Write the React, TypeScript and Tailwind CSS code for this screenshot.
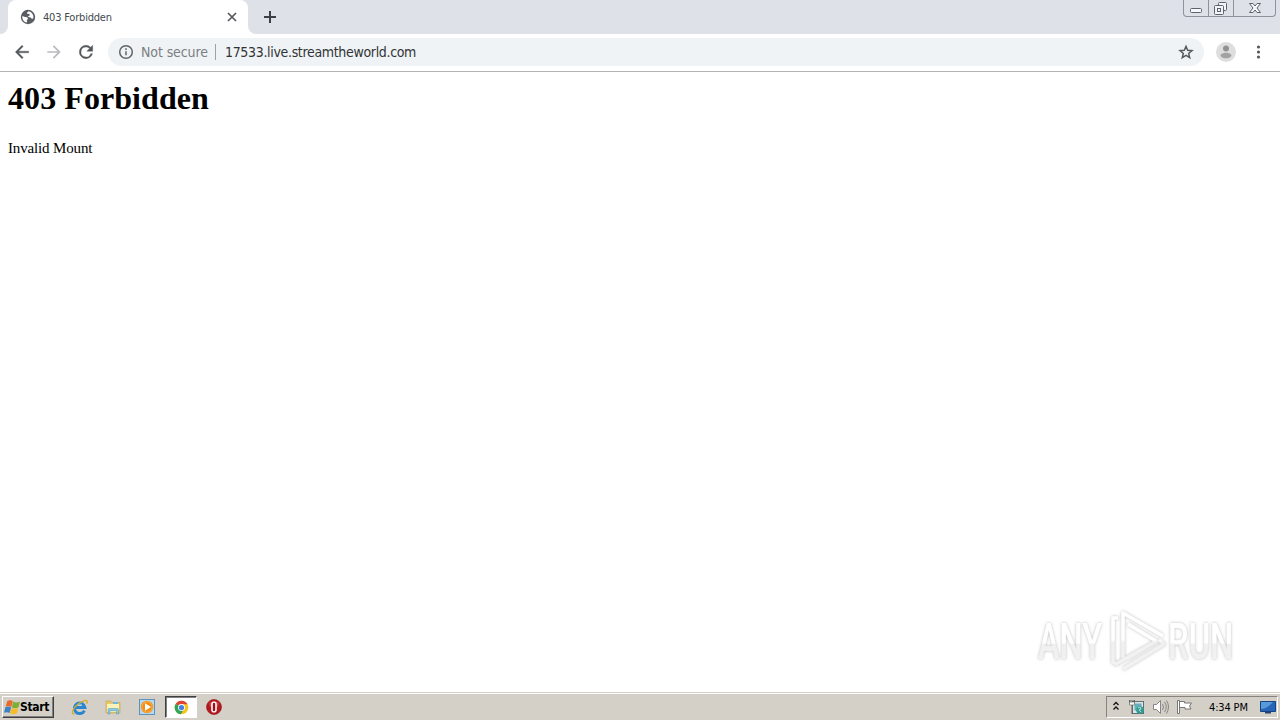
import React from "react";

const PAGE_URL = "17533.live.streamtheworld.com";

function GlobeIcon() {
  return (
    <svg className="h-4 w-4" viewBox="0 0 16 16">
      <circle cx="8" cy="8" r="7.2" fill="#5a5d61" />
      <path d="M2.300 7 5 8.100l2.200.2.8 1.500-1.200 1.400.3 2.300C4.200 13.300 2.300 10.500 2.300 8.200z" fill="#fff" />
      <path d="M8.600 2.300 7 3.700l.4 1.300 2-.2.3 1.800-2.200 1 2.900.8 1.500 1.300 1.400-.2c.5-2.500-.6-5.100-2.700-6.400z" fill="#fff" />
    </svg>
  );
}

function TabStrip() {
  return (
    <div className="flex h-[34px] items-start bg-[#dee1e8]">
      <div className="flex h-[34px] w-2 bg-white">
        <div className="w-full rounded-br-lg bg-[#dee1e8]" />
      </div>
      <div className="flex h-[34px] w-60 items-center rounded-t-lg bg-white pl-3">
        <GlobeIcon />
        <span className="ml-[7px] w-[183px] font-[DejaVu_Sans_Condensed,DejaVu_Sans,sans-serif] text-[11px] leading-none tracking-[-0.2px] text-[#45494d]">403 Forbidden</span>
        <svg className="h-3 w-3" viewBox="0 0 12 12" stroke="#55585c" strokeWidth="1.7">
          <path d="M2 2l8 8M10 2l-8 8" />
        </svg>
      </div>
      <div className="flex h-[34px] w-2 bg-white">
        <div className="w-full rounded-bl-lg bg-[#dee1e8]" />
      </div>
      <svg className="mt-2.5 ml-[7px] h-3.5 w-3.5" viewBox="0 0 14 14" stroke="#3c4045" strokeWidth="2">
        <path d="M7 1v12M1 7h12" />
      </svg>
      <WindowButtons />
    </div>
  );
}

function WindowButtons() {
  return (
    <div className="mr-1 ml-auto flex h-[17px] w-[93px] rounded-b border border-t-0 border-[#8d929b]">
      <div className="flex w-[25px] border-r border-[#8d929b]">
        <svg className="h-4 w-6" viewBox="0 0 24 16" fill="#f7f8fa" stroke="#5d626c">
          <rect x="6.500" y="8.500" width="11" height="4" rx="1" />
        </svg>
      </div>
      <div className="flex w-[25px] border-r border-[#8d929b]">
        <svg className="h-4 w-6" viewBox="0 0 24 16" fill="#f2f4f7" stroke="#5d626c">
          <rect x="9.500" y="2.500" width="8" height="8" rx="1" />
          <rect x="5.500" y="5.500" width="9" height="9" rx="1" />
          <rect x="8.500" y="8.500" width="3" height="3" />
        </svg>
      </div>
      <div className="flex flex-1 justify-center">
        <svg className="h-4 w-5" viewBox="0 0 20 16" fill="#f7f8fa" stroke="#5d626c">
          <path d="M4.500 3.500h3.500l2 2.500 2-2.500h3.500l-3.500 4.500 3.500 4.500h-3.500l-2-2.500-2 2.500h-3.500l3.500-4.500z" />
        </svg>
      </div>
    </div>
  );
}

function Toolbar() {
  return (
    <div className="flex h-[38px] items-center border-b border-[#b3b3b3] bg-white pb-px pl-3">
      <svg className="h-5 w-5" viewBox="0 0 24 24" fill="#54575b">
        <path d="M20 11H7.830l5.590-5.590L12 4l-8 8 8 8 1.410-1.410L7.830 13H20z" stroke="#54575b" strokeWidth=".4" />
      </svg>
      <svg className="ml-3 h-5 w-5" viewBox="0 0 24 24" fill="#b9bbbe">
        <path d="M4 11h12.170l-5.590-5.590L12 4l8 8-8 8-1.410-1.410L16.170 13H4z" />
      </svg>
      <svg className="ml-3 h-5 w-5" viewBox="0 0 24 24" fill="#54575b">
        <path d="M17.650 6.350A7.960 7.960 0 0 0 12 4a8 8 0 1 0 7.730 10h-2.080A6 6 0 1 1 12 6c1.660 0 3.140.690 4.220 1.780L13 11h7V4z" stroke="#54575b" strokeWidth=".5" />
      </svg>
      <div className="ml-3 flex h-7 w-[1096px] items-center rounded-full bg-[#f0f3f5] pr-2.5 pl-2.5">
        <svg className="h-4 w-4" viewBox="0 0 16 16" fill="none" stroke="#606468" strokeWidth="1.500">
          <circle cx="8" cy="8" r="6.300" />
          <path d="M8 7.200v4M8 4.300v1.600" />
        </svg>
        <span className="ml-[7px] w-[74px] font-[DejaVu_Sans_Condensed,DejaVu_Sans,sans-serif] text-[14px] leading-none tracking-[-0.1px] whitespace-nowrap text-[#7a7e83]">Not secure</span>
        <div className="h-4 w-px bg-[#9da1a6]" />
        <span className="ml-[9px] font-[DejaVu_Sans_Condensed,DejaVu_Sans,sans-serif] text-[14px] leading-none tracking-[-0.33px] whitespace-nowrap text-[#303336]">{PAGE_URL}</span>
        <svg className="ml-auto h-4 w-4" viewBox="0 0 24 24" fill="none" stroke="#55595e" strokeWidth="2.200">
          <path d="M12 3.500l2.500 6 6.500.500-5 4.200 1.600 6.400-5.600-3.500-5.600 3.500L8 14.200 3 10l6.500-.500z" />
        </svg>
      </div>
      <svg className="ml-3 h-5 w-5" viewBox="0 0 20 20">
        <circle cx="10" cy="10" r="10" fill="#dedede" />
        <circle cx="10" cy="6.500" r="3" fill="#929292" />
        <path d="M4.500 13.700c0-2 2.800-3 5.500-3s5.500 1 5.500 3c-1 1.900-3.300 2.600-5.500 2.600s-4.500-.700-5.500-2.600z" fill="#a2a2a2" />
      </svg>
      <svg className="ml-3 h-4 w-4" viewBox="0 0 16 16" fill="#55585c">
        <circle cx="10.500" cy="3" r="1.600" />
        <circle cx="10.500" cy="8" r="1.600" />
        <circle cx="10.500" cy="13" r="1.600" />
      </svg>
    </div>
  );
}

function Watermark() {
  return (
    <svg className="mr-[31px] mb-3.5 h-[74px] w-[210px]" viewBox="0 0 210 74">
      <defs>
        <linearGradient id="logoFill" gradientUnits="userSpaceOnUse" x1="0" y1="0" x2="0" y2="74">
          <stop offset="0" stopColor="#ffffff" />
          <stop offset=".48" stopColor="#ffffff" />
          <stop offset=".52" stopColor="#f0f0f0" />
          <stop offset="1" stopColor="#f3f3f3" />
        </linearGradient>
        <linearGradient id="textFill" x1="0" y1="0" x2="0" y2="1">
          <stop offset="0" stopColor="#ffffff" />
          <stop offset=".52" stopColor="#ffffff" />
          <stop offset=".54" stopColor="#f0f0f0" />
          <stop offset="1" stopColor="#f3f3f3" />
        </linearGradient>
        <filter id="logoShadow" x="-10%" y="-10%" width="120%" height="120%">
          <feDropShadow dx="0" dy="0" stdDeviation="1.700" floodColor="#888" floodOpacity=".6" />
        </filter>
      </defs>
      <g filter="url(#logoShadow)" fill="none" stroke="url(#logoFill)" strokeLinejoin="round">
        <g fill="url(#textFill)" stroke="none" fontFamily="Roboto" fontWeight="500" fontSize="50">
          <text transform="translate(7 55) scale(.66 1)" textLength="97" lengthAdjust="spacingAndGlyphs">ANY</text>
          <text transform="translate(137 55) scale(.66 1)" textLength="99" lengthAdjust="spacingAndGlyphs">RUN</text>
        </g>
        <path d="M92 54V9l40 23M97 20l28 17-28 17M87 14h-5v44l5 3M85 60l39-22M92 65l41-25-5-4" strokeWidth="3.500" />
      </g>
    </svg>
  );
}

function WindowsFlag() {
  return (
    <svg className="h-[17px] w-[17px]" viewBox="0 0 17 17">
      <path d="M3.300 2q3-1.500 5.500.3L7.300 8q-3-1.700-5.700-.3z" fill="#e96a2b" />
      <path d="M9.300 2.600q3 1.800 6.700 0L14.500 8.300q-3.500 1.700-6.700 0z" fill="#7eae38" />
      <path d="M1.400 8.300q3-1.500 5.700.2L5.600 14q-2.700-1.500-5.600-.300z" fill="#3e81c5" />
      <path d="M7.600 8.900q3.200 1.600 6.700 0l-1.500 5.600q-3.500 1.600-6.700 0z" fill="#f6bc28" />
    </svg>
  );
}

function ExplorerIcon() {
  return (
    <svg className="h-[17px] w-[17px]" viewBox="0 0 18 18" fill="none">
      <path d="M14.200 12.300A5.600 5.600 0 1 1 14.700 9H5" stroke="#2a87cf" strokeWidth="3.200" />
      <path d="M6 6.500q2.300-2 5.500-.700" stroke="#76c8ef" strokeWidth="1" />
      <path d="M3.700 16C-.500 16 1.500 10 8 5c4-3 8-4.300 9-2.800.500.700 0 2-.600 2.800" stroke="#dba928" strokeWidth="1.400" />
    </svg>
  );
}

function FolderIcon() {
  return (
    <svg className="h-[17px] w-[17px]" viewBox="0 0 17 17">
      <path d="M1 2h5l1 1.500h8V14H1z" fill="#e8c869" stroke="#c5a24d" strokeWidth=".6" />
      <path d="M2 5h12v8H2z" fill="#fff2b8" />
      <path d="M8 3h5v2H8z" fill="#6eb9dd" />
      <path d="M3 15V10.500q0-1 1-1h8.500q1 0 1 1V15h-2v-3.300H5V15z" fill="#8bc9e4" stroke="#5095b9" strokeWidth=".5" />
    </svg>
  );
}

function PlayerIcon() {
  return (
    <svg className="h-[17px] w-[17px]" viewBox="0 0 17 17">
      <rect x=".500" y=".500" width="15" height="15" fill="#b8d8ef" stroke="#5b93bf" />
      <circle cx="8" cy="8" r="6.200" fill="#f28d16" />
      <circle cx="8" cy="8" r="5.200" fill="none" stroke="#ffbd55" strokeWidth=".7" />
      <path d="M6 4.200v7.600L12 8z" fill="#fff" />
    </svg>
  );
}

function ChromeIcon() {
  return (
    <svg className="h-[15px] w-[15px]" viewBox="0 0 16 16">
      <circle cx="8" cy="8" r="7.300" fill="#f6c51d" />
      <path d="M8 8 1.700 4.300A7.300 7.300 0 0 1 14.400 4.500H8z" fill="#dc4437" />
      <path d="M1.700 4.300A7.300 7.300 0 0 0 7.200 15.300l3.500-5.700L8 8z" fill="#30a457" />
      <circle cx="8" cy="8" r="3.700" fill="#fff" />
      <circle cx="8" cy="8" r="2.800" fill="#4383e8" />
    </svg>
  );
}

function OperaIcon() {
  return (
    <svg className="h-4 w-4" viewBox="0 0 16 16">
      <circle cx="8" cy="8" r="7.500" fill="#b61820" stroke="#8c1218" strokeWidth=".6" />
      <path d="M3 4q5-4 10 0l-1 4H4z" fill="#d8595b" opacity=".6" />
      <rect x="5.200" y="2.500" width="5.600" height="11" rx="2.800" fill="#fff" />
      <rect x="6.800" y="3.800" width="2.400" height="8.400" rx="1.200" fill="#9d1018" />
    </svg>
  );
}

function Tray() {
  return (
    <div className="ml-auto flex h-[22px] w-[172px] items-center border border-t-[#87847d] border-r-white border-b-white border-l-[#87847d] pl-1.5">
      <svg className="mb-0.5 h-2.5 w-1.5" viewBox="0 0 6 10" fill="none" stroke="#111" strokeWidth="1.300">
        <path d="M.500 4 3 1.500 5.500 4M.500 8.500 3 6l2.500 2.500" />
      </svg>
      <svg className="ml-[9px] h-4 w-[17px]" viewBox="0 0 17 16">
        <rect x="4.500" y="2.500" width="11" height="12" fill="#dce4e5" stroke="#5e6e72" />
        <rect x="6.500" y="4.500" width="7" height="7" fill="#67aebd" />
        <circle cx="12" cy="11" r="3.800" fill="#329b94" />
        <path d="M10 9l2-1 1 2-2 1 2 2" stroke="#b4e4cf" fill="none" />
        <path d="M1.500 1v3.500h5V1M4 4.500V15M3 1v3M5 1v3" fill="none" stroke="#5e6260" strokeWidth="1" />
        <path d="M1.500 3h5v3h-5z" fill="#f8f8f4" stroke="#646864" strokeWidth=".6" />
      </svg>
      <svg className="ml-[7px] h-4 w-[17px]" viewBox="0 0 17 16" fill="none" stroke="#858585">
        <path d="M1.500 5.500h3l4-4v13l-4-4h-3z" fill="#fff" />
        <path d="M10.500 5q2 3 0 6M12.500 3q3.500 5 0 10M14.500 1.500q4 6.500 0 13" />
      </svg>
      <svg className="ml-[7px] h-4 w-[17px]" viewBox="0 0 17 16" fill="#fff" stroke="#777" strokeWidth="1">
        <path d="M3.500 2.500h5v1.500h7l-2 3 1.500 3h-6V8.500H3.500z" />
        <path d="M1.500 1.500h2v13h-2z" />
      </svg>
      <span className="ml-4 w-[51px] font-[DejaVu_Sans_Condensed,DejaVu_Sans,sans-serif] text-[11px] leading-none tracking-[-0.15px] whitespace-nowrap text-black">4:34 PM</span>
      <svg className="h-3.5 w-4" viewBox="0 0 16 14">
        <path d="M.500 1.500h15v10H.500z" fill="#2765b8" stroke="#174382" />
        <path d="M1 2h12Q8 8 1 9z" fill="#569bd8" />
        <path d="M5 12h6v1.500H5z" fill="#26456e" />
      </svg>
    </div>
  );
}

function Taskbar() {
  return (
    <div className="flex h-7 items-center border-t border-[#d4d0c8] bg-[#d4d0c8] pb-px shadow-[inset_0_1px_0_#fff]">
      <div className="mt-0.5 ml-0.5 flex h-[22px] w-[52px] items-center border border-t-white border-r-[#404040] border-b-[#404040] border-l-white pl-px shadow-[inset_-1px_-1px_0_#808080]">
        <WindowsFlag />
        <span className="-ml-px font-[DejaVu_Sans_Condensed,DejaVu_Sans,sans-serif] text-[12px] leading-none font-bold tracking-[-0.35px] text-black">Start</span>
      </div>
      <div className="mt-0.5 ml-[17px] flex items-center gap-[17px]">
        <ExplorerIcon />
        <FolderIcon />
        <PlayerIcon />
      </div>
      <div className="mt-0.5 ml-[9px] flex h-[22px] w-8 items-center justify-center border border-t-[#404040] border-r-white border-b-white border-l-[#404040] bg-white shadow-[inset_1px_1px_0_#808080]">
        <ChromeIcon />
      </div>
      <div className="mt-0.5 ml-[9px]">
        <OperaIcon />
      </div>
      <div className="mt-0.5 mr-0.5 ml-auto">
        <Tray />
      </div>
    </div>
  );
}

export default function App() {
  return (
    <div className="flex h-[720px] w-[1280px] flex-col overflow-hidden bg-white font-[Liberation_Sans,Arial,sans-serif]">
      <TabStrip />
      <Toolbar />
      <main className="flex flex-1 flex-col px-2 font-[Liberation_Serif,serif] text-black">
        <h1 className="mt-2 text-[32px] leading-[37px] font-bold tracking-[0.07px]">403 Forbidden</h1>
        <p className="mt-[22px] text-[15px] leading-[18px] tracking-[-0.15px]">Invalid Mount</p>
        <div className="mt-auto flex justify-end">
          <Watermark />
        </div>
      </main>
      <Taskbar />
    </div>
  );
}
